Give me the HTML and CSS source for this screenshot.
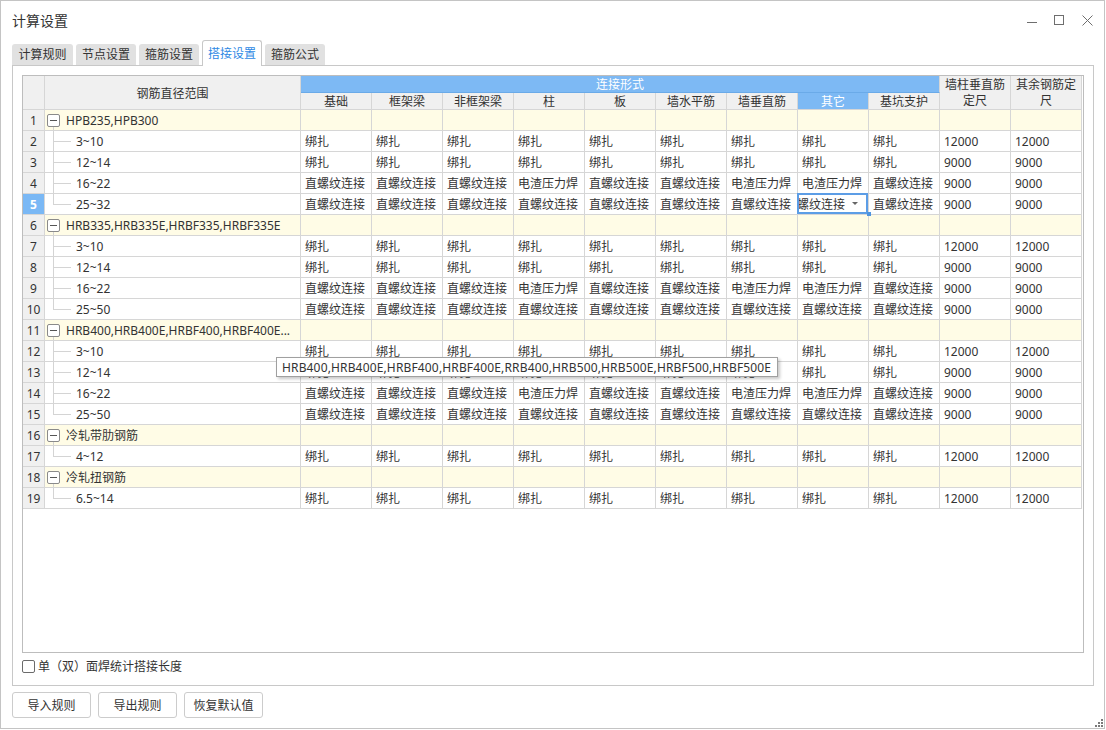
FILE: index.html
```html
<!DOCTYPE html>
<html lang="zh">
<head>
<meta charset="utf-8">
<title>计算设置</title>
<link rel="stylesheet" href="styles.css">
</head>
<body>
<div class="window">
  <div class="titlebar">
    <div class="title">计算设置</div>
    <div class="controls">
      <svg class="ic-min" width="10" height="11" viewBox="0 0 10 11"><line x1="0" y1="7.5" x2="10" y2="7.5" stroke="#6e6e6e" stroke-width="1"/></svg>
      <svg class="ic-max" width="10" height="11" viewBox="0 0 10 11"><rect x="0.5" y="0.5" width="9" height="9" fill="none" stroke="#6e6e6e" stroke-width="1"/></svg>
      <svg class="ic-close" width="11" height="11" viewBox="0 0 11 11"><path d="M0.5 0.5 L10.5 10.5 M10.5 0.5 L0.5 10.5" stroke="#6e6e6e" stroke-width="1"/></svg>
    </div>
  </div>

  <div class="tabs">
    <div class="tab first">计算规则</div>
    <div class="tab">节点设置</div>
    <div class="tab">箍筋设置</div>
    <div class="tab active">搭接设置</div>
    <div class="tab">箍筋公式</div>
  </div>

  <div class="panel">
    <div class="grid">
      <div class="sheet">
        <div class="h corner"></div>
        <div class="h range-h">钢筋直径范围</div>
        <div class="h blue group-h">连接形式</div>
        <div class="h tall">墙柱垂直筋定尺</div>
        <div class="h tall">其余钢筋定尺</div>
        <div class="h sub">基础</div>
        <div class="h sub">框架梁</div>
        <div class="h sub">非框架梁</div>
        <div class="h sub">柱</div>
        <div class="h sub">板</div>
        <div class="h sub">墙水平筋</div>
        <div class="h sub">墙垂直筋</div>
        <div class="h sub blue">其它</div>
        <div class="h sub">基坑支护</div>

        <!-- 1 -->
        <div class="n">1</div>
        <div class="g gr"><i class="box"></i><span>HPB235,HPB300</span></div>
        <div class="g"></div><div class="g"></div><div class="g"></div><div class="g"></div><div class="g"></div><div class="g"></div><div class="g"></div><div class="g"></div><div class="g"></div><div class="g"></div><div class="g"></div>
        <!-- 2 -->
        <div class="n">2</div>
        <div class="t">3~10</div>
        <div>绑扎</div><div>绑扎</div><div>绑扎</div><div>绑扎</div><div>绑扎</div><div>绑扎</div><div>绑扎</div><div>绑扎</div><div>绑扎</div><div>12000</div><div>12000</div>
        <!-- 3 -->
        <div class="n">3</div>
        <div class="t">12~14</div>
        <div>绑扎</div><div>绑扎</div><div>绑扎</div><div>绑扎</div><div>绑扎</div><div>绑扎</div><div>绑扎</div><div>绑扎</div><div>绑扎</div><div>9000</div><div>9000</div>
        <!-- 4 -->
        <div class="n">4</div>
        <div class="t">16~22</div>
        <div>直螺纹连接</div><div>直螺纹连接</div><div>直螺纹连接</div><div>电渣压力焊</div><div>直螺纹连接</div><div>直螺纹连接</div><div>电渣压力焊</div><div>电渣压力焊</div><div>直螺纹连接</div><div>9000</div><div>9000</div>
        <!-- 5 -->
        <div class="n sel">5</div>
        <div class="t tl">25~32</div>
        <div>直螺纹连接</div><div>直螺纹连接</div><div>直螺纹连接</div><div>直螺纹连接</div><div>直螺纹连接</div><div>直螺纹连接</div><div>直螺纹连接</div>
        <div class="ed"><div class="editor"><span class="etext">直螺纹连接</span><i class="caret"></i></div><i class="handle"></i></div>
        <div>直螺纹连接</div><div>9000</div><div>9000</div>
        <!-- 6 -->
        <div class="n">6</div>
        <div class="g gr"><i class="box"></i><span>HRB335,HRB335E,HRBF335,HRBF335E</span></div>
        <div class="g"></div><div class="g"></div><div class="g"></div><div class="g"></div><div class="g"></div><div class="g"></div><div class="g"></div><div class="g"></div><div class="g"></div><div class="g"></div><div class="g"></div>
        <!-- 7 -->
        <div class="n">7</div>
        <div class="t">3~10</div>
        <div>绑扎</div><div>绑扎</div><div>绑扎</div><div>绑扎</div><div>绑扎</div><div>绑扎</div><div>绑扎</div><div>绑扎</div><div>绑扎</div><div>12000</div><div>12000</div>
        <!-- 8 -->
        <div class="n">8</div>
        <div class="t">12~14</div>
        <div>绑扎</div><div>绑扎</div><div>绑扎</div><div>绑扎</div><div>绑扎</div><div>绑扎</div><div>绑扎</div><div>绑扎</div><div>绑扎</div><div>9000</div><div>9000</div>
        <!-- 9 -->
        <div class="n">9</div>
        <div class="t">16~22</div>
        <div>直螺纹连接</div><div>直螺纹连接</div><div>直螺纹连接</div><div>电渣压力焊</div><div>直螺纹连接</div><div>直螺纹连接</div><div>电渣压力焊</div><div>电渣压力焊</div><div>直螺纹连接</div><div>9000</div><div>9000</div>
        <!-- 10 -->
        <div class="n">10</div>
        <div class="t tl">25~50</div>
        <div>直螺纹连接</div><div>直螺纹连接</div><div>直螺纹连接</div><div>直螺纹连接</div><div>直螺纹连接</div><div>直螺纹连接</div><div>直螺纹连接</div><div>直螺纹连接</div><div>直螺纹连接</div><div>9000</div><div>9000</div>
        <!-- 11 -->
        <div class="n">11</div>
        <div class="g gr"><i class="box"></i><span>HRB400,HRB400E,HRBF400,HRBF400E...</span></div>
        <div class="g"></div><div class="g"></div><div class="g"></div><div class="g"></div><div class="g"></div><div class="g"></div><div class="g"></div><div class="g"></div><div class="g"></div><div class="g"></div><div class="g"></div>
        <!-- 12 -->
        <div class="n">12</div>
        <div class="t">3~10</div>
        <div>绑扎</div><div>绑扎</div><div>绑扎</div><div>绑扎</div><div>绑扎</div><div>绑扎</div><div>绑扎</div><div>绑扎</div><div>绑扎</div><div>12000</div><div>12000</div>
        <!-- 13 -->
        <div class="n">13</div>
        <div class="t">12~14</div>
        <div>绑扎</div><div>绑扎</div><div>绑扎</div><div>绑扎</div><div>绑扎</div><div>绑扎</div><div>绑扎</div><div>绑扎</div><div>绑扎</div><div>9000</div><div>9000</div>
        <!-- 14 -->
        <div class="n">14</div>
        <div class="t">16~22</div>
        <div>直螺纹连接</div><div>直螺纹连接</div><div>直螺纹连接</div><div>电渣压力焊</div><div>直螺纹连接</div><div>直螺纹连接</div><div>电渣压力焊</div><div>电渣压力焊</div><div>直螺纹连接</div><div>9000</div><div>9000</div>
        <!-- 15 -->
        <div class="n">15</div>
        <div class="t tl">25~50</div>
        <div>直螺纹连接</div><div>直螺纹连接</div><div>直螺纹连接</div><div>直螺纹连接</div><div>直螺纹连接</div><div>直螺纹连接</div><div>直螺纹连接</div><div>直螺纹连接</div><div>直螺纹连接</div><div>9000</div><div>9000</div>
        <!-- 16 -->
        <div class="n">16</div>
        <div class="g gr"><i class="box"></i><span>冷轧带肋钢筋</span></div>
        <div class="g"></div><div class="g"></div><div class="g"></div><div class="g"></div><div class="g"></div><div class="g"></div><div class="g"></div><div class="g"></div><div class="g"></div><div class="g"></div><div class="g"></div>
        <!-- 17 -->
        <div class="n">17</div>
        <div class="t tl">4~12</div>
        <div>绑扎</div><div>绑扎</div><div>绑扎</div><div>绑扎</div><div>绑扎</div><div>绑扎</div><div>绑扎</div><div>绑扎</div><div>绑扎</div><div>12000</div><div>12000</div>
        <!-- 18 -->
        <div class="n">18</div>
        <div class="g gr"><i class="box"></i><span>冷轧扭钢筋</span></div>
        <div class="g"></div><div class="g"></div><div class="g"></div><div class="g"></div><div class="g"></div><div class="g"></div><div class="g"></div><div class="g"></div><div class="g"></div><div class="g"></div><div class="g"></div>
        <!-- 19 -->
        <div class="n">19</div>
        <div class="t tl">6.5~14</div>
        <div>绑扎</div><div>绑扎</div><div>绑扎</div><div>绑扎</div><div>绑扎</div><div>绑扎</div><div>绑扎</div><div>绑扎</div><div>绑扎</div><div>12000</div><div>12000</div>
      </div>
    </div>
    <label class="check"><span class="cbox"></span><span>单（双）面焊统计搭接长度</span></label>
  </div>

  <div class="buttons">
    <button class="btn">导入规则</button>
    <button class="btn">导出规则</button>
    <button class="btn">恢复默认值</button>
  </div>

  <div class="tooltip">HRB400,HRB400E,HRBF400,HRBF400E,RRB400,HRB500,HRB500E,HRBF500,HRBF500E</div>

  <svg class="grip" width="8" height="8" viewBox="0 0 8 8">
    <rect x="6" y="0" width="2" height="2" fill="#7a7a7a"/>
    <rect x="3" y="3" width="2" height="2" fill="#7a7a7a"/>
    <rect x="6" y="3" width="2" height="2" fill="#7a7a7a"/>
    <rect x="0" y="6" width="2" height="2" fill="#7a7a7a"/>
    <rect x="3" y="6" width="2" height="2" fill="#7a7a7a"/>
    <rect x="6" y="6" width="2" height="2" fill="#7a7a7a"/>
  </svg>
</div>
</body>
</html>
```

FILE: styles.css
```css
* { box-sizing: border-box; }
html, body { margin: 0; background: #fff; }
body {
  font-family: "Noto Sans", "Noto Sans CJK SC", sans-serif;
  font-size: 12px;
  color: #333;
}

.window {
  position: relative;
  width: 1105px;
  height: 729px;
  border: 1px solid #c4c4c4;
  background: #fff;
}

/* title bar */
.titlebar {
  height: 39px;
  display: flex;
  align-items: center;
  justify-content: space-between;
  padding: 0 11px 0 11px;
}
.title { font-size: 14px; line-height: 20px; color: #333; }
.controls { display: flex; align-items: center; }
.controls svg { display: block; }
.ic-max { margin-left: 17px; }
.ic-close { margin-left: 18px; }

/* tabs */
.tabs {
  display: flex;
  align-items: flex-end;
  height: 25px;
  padding-left: 11px;
  gap: 3px;
}
.tab {
  width: 60px;
  height: 21px;
  line-height: 21px;
  text-align: center;
  background: #e1e1e1;
  border-radius: 3px 3px 0 0;
  color: #333;
}
.tab.first { width: 61px; }
.tab.active {
  position: relative;
  z-index: 1;
  height: 26px;
  margin-bottom: -1px;
  line-height: 25px;
  background: #fff;
  border: 1px solid #c8c8c8;
  border-bottom: none;
  color: #2e89e4;
}

/* panel */
.panel {
  margin-left: 11px;
  width: 1082px;
  height: 621px;
  border: 1px solid #c8c8c8;
  padding: 9px;
}
.grid {
  height: 578px;
  border: 1px solid #bdbdbd;
  background: #fff;
  overflow: hidden;
}

/* sheet */
.sheet {
  display: grid;
  grid-template-columns: 22px 256px repeat(11, 71px);
  grid-template-rows: 17px 17px repeat(19, 21px);
}
.sheet > div {
  border-right: 1px solid #d6d6d6;
  border-bottom: 1px solid #d6d6d6;
  white-space: nowrap;
  overflow: hidden;
  line-height: 22px;
  padding-left: 4px;
}
.sheet > .h {
  background: #f0f0f0;
  display: flex;
  align-items: center;
  justify-content: center;
  padding: 0 2px;
  line-height: 16px;
  white-space: normal;
  text-align: center;
  color: #333;
}
.sheet > .sub, .sheet > .group-h { padding-top: 2px; }
.sheet > .range-h { padding-top: 3px; }
.sheet > .corner, .sheet > .range-h, .sheet > .tall { grid-row: span 2; }
.sheet > .group-h { grid-column: span 9; }
.sheet > .blue { background: #7db9f4; color: #fff; }
.sheet > .group-h { border-bottom-color: #6aaae8; }

.sheet > .n {
  background: #f0f0f0;
  text-align: center;
  padding-left: 0;
}
.sheet > .n.sel { background: #7ab8f5; color: #fff; font-weight: bold; }

.sheet > .g { background: #fffce6; }
.sheet > .gr {
  display: flex;
  align-items: center;
  gap: 6px;
  padding-left: 2px;
  background:
    linear-gradient(#d4d4d4, #d4d4d4) 8px 16px / 1px 4px no-repeat,
    #fffce6;
}
.gr span { line-height: 20px; padding-top: 2px; }
.box {
  flex: none;
  width: 13px;
  height: 13px;
  border: 1px solid #8a8a8a;
  border-radius: 2px;
  background: linear-gradient(#555, #555) center / 7px 1px no-repeat, #fff;
}

.sheet > .t {
  padding-left: 31px;
  background:
    linear-gradient(#d4d4d4, #d4d4d4) 8px 0 / 1px 100% no-repeat,
    linear-gradient(#d4d4d4, #d4d4d4) 8px 10px / 18px 1px no-repeat;
}
.sheet > .t.tl {
  background:
    linear-gradient(#d4d4d4, #d4d4d4) 8px 0 / 1px 11px no-repeat,
    linear-gradient(#d4d4d4, #d4d4d4) 8px 10px / 18px 1px no-repeat;
}

/* in-cell editor */
.sheet > .ed {
  position: relative;
  overflow: visible;
  padding: 0;
}
.editor {
  position: absolute;
  left: -1px;
  top: -1px;
  width: 71px;
  height: 21px;
  border: 2px solid #5c9de6;
  background: #fff;
  display: flex;
  align-items: center;
  overflow: hidden;
}
.etext { flex: none; margin-left: -14px; line-height: 17px; padding-top: 2px; }
.caret {
  margin-left: auto;
  margin-right: 8px;
  width: 0;
  height: 0;
  border-left: 3px solid transparent;
  border-right: 3px solid transparent;
  border-top: 3px solid #666;
}
.handle {
  position: absolute;
  left: 69px;
  top: 18px;
  width: 4px;
  height: 4px;
  background: #4f94e0;
}

/* checkbox */
.check {
  display: flex;
  align-items: center;
  gap: 3px;
  margin-top: 7px;
  height: 13px;
  line-height: 13px;
  color: #333;
}
.cbox {
  width: 13px;
  height: 13px;
  border: 1px solid #6b6b6b;
  border-radius: 2px;
  background: #fff;
}

/* buttons */
.buttons {
  display: flex;
  gap: 7px;
  margin: 6px 0 0 11px;
}
.btn {
  width: 79px;
  height: 26px;
  padding: 0;
  border: 1px solid #cccccc;
  border-radius: 3px;
  background: #fff;
  font-family: "Noto Sans", "Noto Sans CJK SC", sans-serif;
  font-size: 12px;
  color: #333;
}

/* tooltip overlay */
.tooltip {
  position: absolute;
  left: 275px;
  top: 356px;
  height: 20px;
  line-height: 19px;
  padding: 0 6px 0 5px;
  border: 1px solid #a0a0a0;
  background: #fff;
  white-space: nowrap;
  letter-spacing: 0.15px;
  color: #333;
  box-shadow: 2px 2px 3px rgba(0, 0, 0, 0.22);
}

.grip {
  position: absolute;
  right: 1px;
  bottom: 1px;
}
```
